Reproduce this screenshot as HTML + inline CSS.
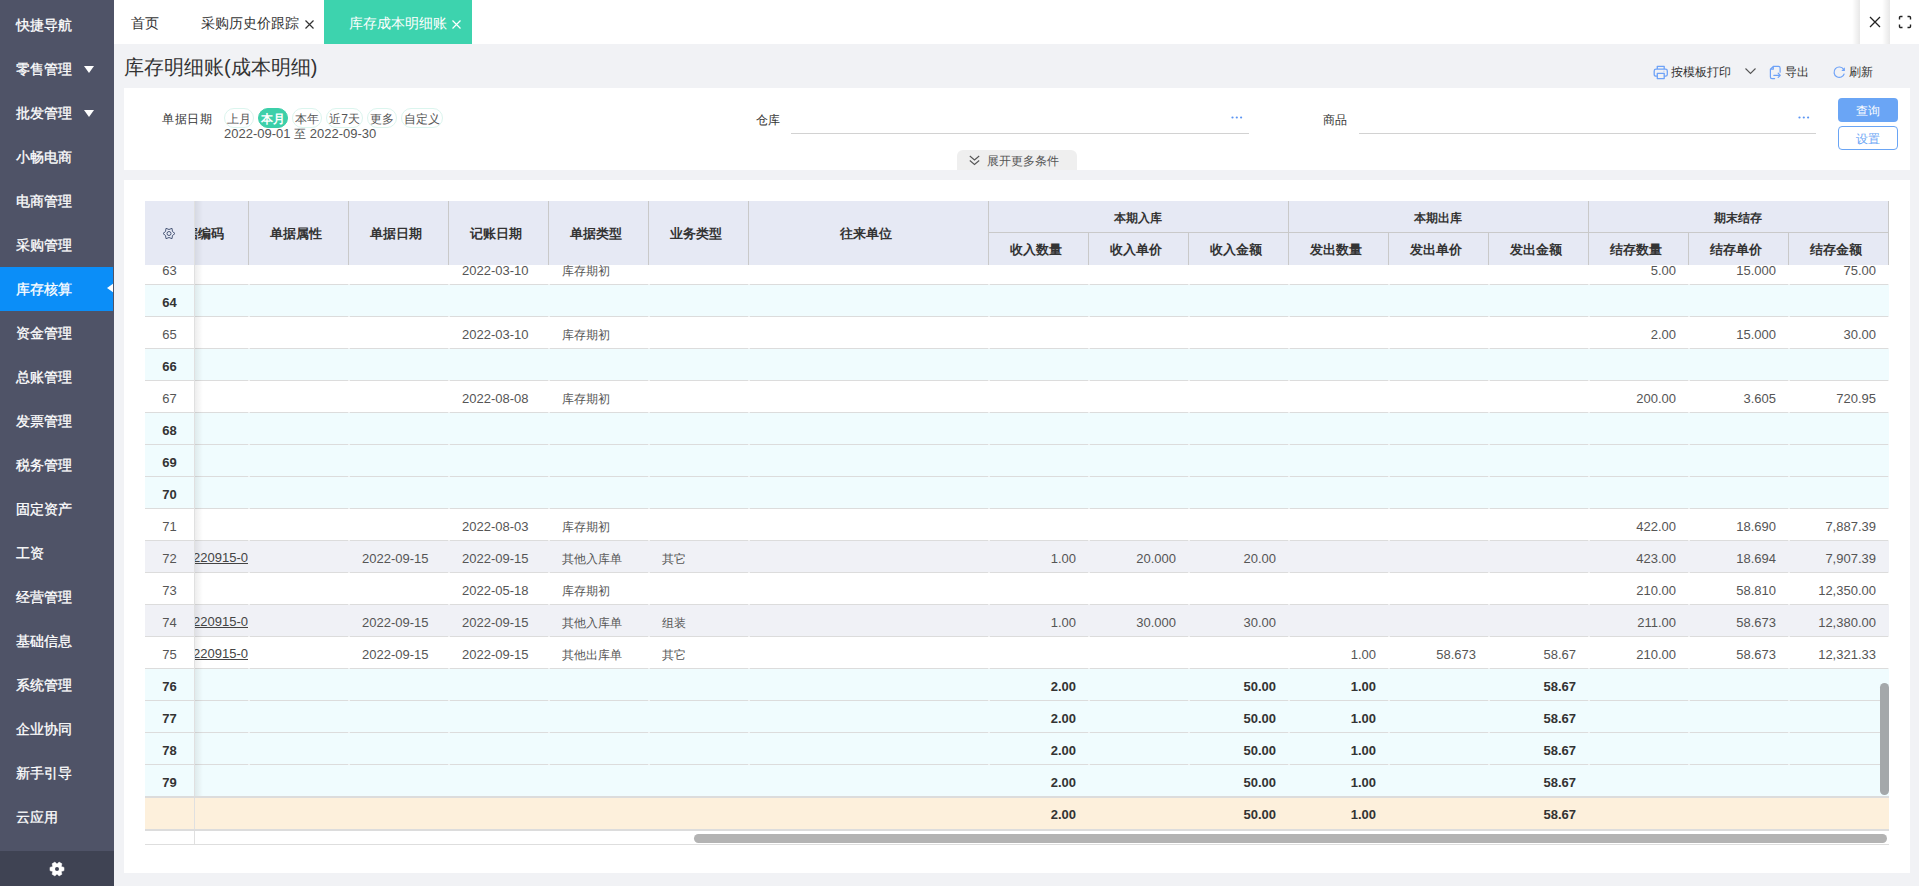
<!DOCTYPE html><html><head><meta charset="utf-8"><style>
*{margin:0;padding:0;box-sizing:border-box}
html,body{width:1919px;height:886px;overflow:hidden;background:#f1f2f5;font-family:"Liberation Sans",sans-serif;color:#333}
.ab{position:absolute}
.t{position:absolute;white-space:nowrap;line-height:1}
#side{position:absolute;left:0;top:0;width:114px;height:886px;background:#4f5367}
.si{position:absolute;left:0;width:114px;height:44px;color:#fff;font-size:14px;-webkit-text-stroke:.3px #fff;line-height:44px;padding-left:16px}
.si.act{background:linear-gradient(to right,#0b8ef8 113px,#4f5367 113px)}
.tri{position:absolute;left:84px;top:19px;width:0;height:0;border-left:5px solid transparent;border-right:5px solid transparent;border-top:7px solid #fff}
#tabs{position:absolute;left:114px;top:0;width:1805px;height:44px;background:#fff}
.tab{position:absolute;top:0;height:44px;line-height:44px;font-size:14px;color:#333}
.x{font-size:14px}
.pill{position:absolute;top:108px;height:20px;line-height:20px;font-size:12px;color:#555;border:1px solid #dbf5ee;border-radius:10px;text-align:center}
.pill.on{background:#3ccfa9;border-color:#3ccfa9;color:#fff;font-weight:bold}
.hd{position:absolute;background:#e6e9f4;font-weight:bold;font-size:13px;color:#333;text-align:center}
.c{position:absolute;font-size:13px;color:#555;white-space:nowrap;line-height:36px;height:32px}
.r{text-align:right}
.b{font-weight:bold;color:#333}
</style></head><body>
<div id="side">
<div class="si" style="top:3px">快捷导航</div>
<div class="si" style="top:47px">零售管理<span class="tri"></span></div>
<div class="si" style="top:91px">批发管理<span class="tri"></span></div>
<div class="si" style="top:135px">小畅电商</div>
<div class="si" style="top:179px">电商管理</div>
<div class="si" style="top:223px">采购管理</div>
<div class="si act" style="top:267px">库存核算<svg class="ab" style="left:106px;top:15px" width="8" height="12" viewBox="0 0 8 12"><path d="M1 6L7 1.7V10.3z" fill="#fff"/></svg></div>
<div class="si" style="top:311px">资金管理</div>
<div class="si" style="top:355px">总账管理</div>
<div class="si" style="top:399px">发票管理</div>
<div class="si" style="top:443px">税务管理</div>
<div class="si" style="top:487px">固定资产</div>
<div class="si" style="top:531px">工资</div>
<div class="si" style="top:575px">经营管理</div>
<div class="si" style="top:619px">基础信息</div>
<div class="si" style="top:663px">系统管理</div>
<div class="si" style="top:707px">企业协同</div>
<div class="si" style="top:751px">新手引导</div>
<div class="si" style="top:795px">云应用</div>
<div class="ab" style="left:0;top:851px;width:114px;height:35px;background:#3f4353"></div>
<svg class="ab" style="left:49px;top:861px" width="16" height="16" viewBox="0 0 16 16"><path fill="#fff" stroke="#fff" stroke-width="0.5" stroke-linejoin="round" fill-rule="evenodd" d="M12.24 10.45 L15.02 9.62 L15.02 6.38 L12.24 5.55 L12.91 2.73 L10.11 1.11 L8.00 3.10 L5.89 1.11 L3.09 2.73 L3.76 5.55 L0.98 6.38 L0.98 9.62 L3.76 10.45 L3.09 13.27 L5.89 14.89 L8.00 12.90 L10.11 14.89 L12.91 13.27Z"/><circle cx="8" cy="8" r="2" fill="#3f4353"/></svg>
</div>
<div id="tabs"></div>
<div class="t" style="left:131px;top:16px;font-size:14px;color:#333">首页</div>
<div class="t" style="left:201px;top:16px;font-size:14px;color:#333">采购历史价跟踪</div>
<svg class="ab" style="left:305px;top:20px" width="9" height="9" viewBox="0 0 9 9"><path d="M.5.5l8 8M8.5.5l-8 8" stroke="#333" stroke-width="1.2"/></svg>
<div class="ab" style="left:324px;top:0;width:148px;height:44px;background:#3dd3ae"></div>
<div class="t" style="left:349px;top:16px;font-size:14px;color:#fff">库存成本明细账</div>
<svg class="ab" style="left:452px;top:20px" width="9" height="9" viewBox="0 0 9 9"><path d="M.5.5l8 8M8.5.5l-8 8" stroke="#fff" stroke-width="1.2"/></svg>
<div class="ab" style="left:1852px;top:0;width:8px;height:44px;background:linear-gradient(to right,rgba(0,0,0,0),rgba(0,0,0,.09))"></div>
<div class="ab" style="left:1882px;top:0;width:8px;height:44px;background:linear-gradient(to right,rgba(0,0,0,0),rgba(0,0,0,.09))"></div>
<svg class="ab" style="left:1869px;top:16px" width="12" height="12" viewBox="0 0 12 12"><path d="M1 1l10 10M11 1L1 11" stroke="#222" stroke-width="1.3"/></svg>
<svg class="ab" style="left:1898px;top:15px" width="14" height="14" viewBox="0 0 14 14"><path d="M1.5 4.5V2.5a1 1 0 0 1 1-1h2M9.5 1.5h2a1 1 0 0 1 1 1v2M12.5 9.5v2a1 1 0 0 1-1 1h-2M4.5 12.5h-2a1 1 0 0 1-1-1v-2" fill="none" stroke="#222" stroke-width="1.4"/></svg>
<div class="t" style="left:124px;top:57px;font-size:20px;color:#333">库存明细账(成本明细)</div>
<svg class="ab" style="left:1653px;top:65px" width="15" height="15" viewBox="0 0 15 15"><path d="M4.3 4.2V1.3h6.9v2.9M4.3 11.2H3a1.8 1.8 0 0 1-1.8-1.8V6a1.8 1.8 0 0 1 1.8-1.8h9.5A1.8 1.8 0 0 1 14.3 6v3.4a1.8 1.8 0 0 1-1.8 1.8h-1.3M4.3 8.3h6.9v5.3H4.3z" fill="none" stroke="#6ea2f7" stroke-width="1.3" stroke-linejoin="round"/><path d="M10.3 6.2h1.2" stroke="#a9c6fa" stroke-width="1"/></svg>
<div class="t" style="left:1671px;top:66px;font-size:12px;color:#333">按模板打印</div>
<svg class="ab" style="left:1745px;top:68px" width="11" height="7" viewBox="0 0 11 7"><path d="M.5.5l5 5 5-5" fill="none" stroke="#555" stroke-width="1.1"/></svg>
<svg class="ab" style="left:1769px;top:65px" width="13" height="15" viewBox="0 0 13 15"><path d="M4.3 1.3h5.2a1.6 1.6 0 0 1 1.6 1.6v4.3M5.6 13.6H3a1.6 1.6 0 0 1-1.6-1.6V4.2L4.3 1.3v2.9H1.4M4.8 10.3h6.5M9.2 8.2l2.1 2.1-2.1 2.1" fill="none" stroke="#6ea2f7" stroke-width="1.2" stroke-linejoin="round" stroke-linecap="round"/></svg>
<div class="t" style="left:1785px;top:66px;font-size:12px;color:#333">导出</div>
<svg class="ab" style="left:1832px;top:66px" width="14" height="13" viewBox="0 0 14 13"><path d="M11.6 3.3A5.2 5.2 0 1 0 12.3 7.6" fill="none" stroke="#6ea2f7" stroke-width="1.2"/><path d="M12.9 1.3v3.6H9.3z" fill="#6ea2f7"/></svg>
<div class="t" style="left:1849px;top:66px;font-size:12px;color:#333">刷新</div>
<div class="ab" style="left:124px;top:88px;width:1786px;height:82px;background:#fff"></div>
<div class="t" style="left:162px;top:113px;font-size:12px;color:#333;letter-spacing:.5px">单据日期</div>
<div class="pill" style="left:224px;width:30px">上月</div>
<div class="pill on" style="left:258px;width:30px">本月</div>
<div class="pill" style="left:292px;width:30px">本年</div>
<div class="pill" style="left:326px;width:37px">近7天</div>
<div class="pill" style="left:367px;width:30px">更多</div>
<div class="pill" style="left:401px;width:42px">自定义</div>
<div class="t" style="left:224px;top:127px;font-size:13px;color:#555">2022-09-01 <span style="font-size:12px">至</span> 2022-09-30</div>
<div class="t" style="left:756px;top:114px;font-size:12px;color:#333">仓库</div>
<div class="ab" style="left:791px;top:133px;width:458px;height:1px;background:#d2d2d2"></div>
<svg class="ab" style="left:1231px;top:116px" width="12" height="3" viewBox="0 0 12 3"><circle cx="1.5" cy="1.5" r="1.1" fill="#5b95f3"/><circle cx="5.8" cy="1.5" r="1.1" fill="#5b95f3"/><circle cx="10.1" cy="1.5" r="1.1" fill="#5b95f3"/></svg>
<div class="t" style="left:1323px;top:114px;font-size:12px;color:#333">商品</div>
<div class="ab" style="left:1359px;top:133px;width:457px;height:1px;background:#d2d2d2"></div>
<svg class="ab" style="left:1798px;top:116px" width="12" height="3" viewBox="0 0 12 3"><circle cx="1.5" cy="1.5" r="1.1" fill="#5b95f3"/><circle cx="5.8" cy="1.5" r="1.1" fill="#5b95f3"/><circle cx="10.1" cy="1.5" r="1.1" fill="#5b95f3"/></svg>
<div class="ab" style="left:1838px;top:98px;width:60px;height:24px;background:#6aa5f5;border-radius:4px;color:#fff;font-size:12px;line-height:27px;text-align:center">查询</div>
<div class="ab" style="left:1838px;top:126px;width:60px;height:24px;background:#fff;border:1px solid #6aa5f5;border-radius:4px;color:#6aa5f5;font-size:12px;line-height:25px;text-align:center">设置</div>
<div class="ab" style="left:957px;top:150px;width:120px;height:20px;background:#efefef;border-radius:6px 6px 0 0"></div>
<svg class="ab" style="left:969px;top:155px" width="11" height="11" viewBox="0 0 11 11"><path d="M.8 1l4.7 4 4.7-4M.8 5.5l4.7 4 4.7-4" fill="none" stroke="#555" stroke-width="1.1"/></svg>
<div class="t" style="left:987px;top:155px;font-size:12px;color:#555">展开更多条件</div>
<div class="ab" style="left:124px;top:180px;width:1786px;height:693px;background:#fff"></div>
<div class="ab" style="left:145px;top:265px;width:1744px;height:531px;overflow:hidden">
<div class="ab" style="left:0;top:-12px;width:1744px;height:31px;background:#fff"></div>
<div class="ab" style="left:0;top:19px;width:1744px;height:1px;background:#dcdcdc"></div>
<div class="c" style="left:317px;top:-12px;font-size:13px">2022-03-10</div>
<div class="c" style="left:417px;top:-12px;font-size:12px">库存期初</div>
<div class="c r" style="right:213px;top:-12px">5.00</div>
<div class="c r" style="right:113px;top:-12px">15.000</div>
<div class="c r" style="right:13px;top:-12px">75.00</div>
<div class="ab" style="left:0;top:20px;width:1744px;height:31px;background:#f0fcfe"></div>
<div class="ab" style="left:0;top:51px;width:1744px;height:1px;background:#dcdcdc"></div>
<div class="ab" style="left:0;top:52px;width:1744px;height:31px;background:#fff"></div>
<div class="ab" style="left:0;top:83px;width:1744px;height:1px;background:#dcdcdc"></div>
<div class="c" style="left:317px;top:52px;font-size:13px">2022-03-10</div>
<div class="c" style="left:417px;top:52px;font-size:12px">库存期初</div>
<div class="c r" style="right:213px;top:52px">2.00</div>
<div class="c r" style="right:113px;top:52px">15.000</div>
<div class="c r" style="right:13px;top:52px">30.00</div>
<div class="ab" style="left:0;top:84px;width:1744px;height:31px;background:#f0fcfe"></div>
<div class="ab" style="left:0;top:115px;width:1744px;height:1px;background:#dcdcdc"></div>
<div class="ab" style="left:0;top:116px;width:1744px;height:31px;background:#fff"></div>
<div class="ab" style="left:0;top:147px;width:1744px;height:1px;background:#dcdcdc"></div>
<div class="c" style="left:317px;top:116px;font-size:13px">2022-08-08</div>
<div class="c" style="left:417px;top:116px;font-size:12px">库存期初</div>
<div class="c r" style="right:213px;top:116px">200.00</div>
<div class="c r" style="right:113px;top:116px">3.605</div>
<div class="c r" style="right:13px;top:116px">720.95</div>
<div class="ab" style="left:0;top:148px;width:1744px;height:31px;background:#f0fcfe"></div>
<div class="ab" style="left:0;top:179px;width:1744px;height:1px;background:#dcdcdc"></div>
<div class="ab" style="left:0;top:180px;width:1744px;height:31px;background:#f0fcfe"></div>
<div class="ab" style="left:0;top:211px;width:1744px;height:1px;background:#dcdcdc"></div>
<div class="ab" style="left:0;top:212px;width:1744px;height:31px;background:#f0fcfe"></div>
<div class="ab" style="left:0;top:243px;width:1744px;height:1px;background:#dcdcdc"></div>
<div class="ab" style="left:0;top:244px;width:1744px;height:31px;background:#fff"></div>
<div class="ab" style="left:0;top:275px;width:1744px;height:1px;background:#dcdcdc"></div>
<div class="c" style="left:317px;top:244px;font-size:13px">2022-08-03</div>
<div class="c" style="left:417px;top:244px;font-size:12px">库存期初</div>
<div class="c r" style="right:213px;top:244px">422.00</div>
<div class="c r" style="right:113px;top:244px">18.690</div>
<div class="c r" style="right:13px;top:244px">7,887.39</div>
<div class="ab" style="left:0;top:276px;width:1744px;height:31px;background:#f0f1f6"></div>
<div class="ab" style="left:0;top:307px;width:1744px;height:1px;background:#dcdcdc"></div>
<div class="ab" style="left:49px;top:276px;width:54px;height:31px;overflow:hidden"><div class="c r" style="right:0;top:-1px;text-decoration:underline;color:#444">220915-0</div></div>
<div class="c" style="left:217px;top:276px;font-size:13px">2022-09-15</div>
<div class="c" style="left:317px;top:276px;font-size:13px">2022-09-15</div>
<div class="c" style="left:417px;top:276px;font-size:12px">其他入库单</div>
<div class="c" style="left:517px;top:276px;font-size:12px">其它</div>
<div class="c r" style="right:813px;top:276px">1.00</div>
<div class="c r" style="right:713px;top:276px">20.000</div>
<div class="c r" style="right:613px;top:276px">20.00</div>
<div class="c r" style="right:213px;top:276px">423.00</div>
<div class="c r" style="right:113px;top:276px">18.694</div>
<div class="c r" style="right:13px;top:276px">7,907.39</div>
<div class="ab" style="left:0;top:308px;width:1744px;height:31px;background:#fff"></div>
<div class="ab" style="left:0;top:339px;width:1744px;height:1px;background:#dcdcdc"></div>
<div class="c" style="left:317px;top:308px;font-size:13px">2022-05-18</div>
<div class="c" style="left:417px;top:308px;font-size:12px">库存期初</div>
<div class="c r" style="right:213px;top:308px">210.00</div>
<div class="c r" style="right:113px;top:308px">58.810</div>
<div class="c r" style="right:13px;top:308px">12,350.00</div>
<div class="ab" style="left:0;top:340px;width:1744px;height:31px;background:#f0f1f6"></div>
<div class="ab" style="left:0;top:371px;width:1744px;height:1px;background:#dcdcdc"></div>
<div class="ab" style="left:49px;top:340px;width:54px;height:31px;overflow:hidden"><div class="c r" style="right:0;top:-1px;text-decoration:underline;color:#444">220915-0</div></div>
<div class="c" style="left:217px;top:340px;font-size:13px">2022-09-15</div>
<div class="c" style="left:317px;top:340px;font-size:13px">2022-09-15</div>
<div class="c" style="left:417px;top:340px;font-size:12px">其他入库单</div>
<div class="c" style="left:517px;top:340px;font-size:12px">组装</div>
<div class="c r" style="right:813px;top:340px">1.00</div>
<div class="c r" style="right:713px;top:340px">30.000</div>
<div class="c r" style="right:613px;top:340px">30.00</div>
<div class="c r" style="right:213px;top:340px">211.00</div>
<div class="c r" style="right:113px;top:340px">58.673</div>
<div class="c r" style="right:13px;top:340px">12,380.00</div>
<div class="ab" style="left:0;top:372px;width:1744px;height:31px;background:#fff"></div>
<div class="ab" style="left:0;top:403px;width:1744px;height:1px;background:#dcdcdc"></div>
<div class="ab" style="left:49px;top:372px;width:54px;height:31px;overflow:hidden"><div class="c r" style="right:0;top:-1px;text-decoration:underline;color:#444">220915-0</div></div>
<div class="c" style="left:217px;top:372px;font-size:13px">2022-09-15</div>
<div class="c" style="left:317px;top:372px;font-size:13px">2022-09-15</div>
<div class="c" style="left:417px;top:372px;font-size:12px">其他出库单</div>
<div class="c" style="left:517px;top:372px;font-size:12px">其它</div>
<div class="c r" style="right:513px;top:372px">1.00</div>
<div class="c r" style="right:413px;top:372px">58.673</div>
<div class="c r" style="right:313px;top:372px">58.67</div>
<div class="c r" style="right:213px;top:372px">210.00</div>
<div class="c r" style="right:113px;top:372px">58.673</div>
<div class="c r" style="right:13px;top:372px">12,321.33</div>
<div class="ab" style="left:0;top:404px;width:1744px;height:31px;background:#f0fcfe"></div>
<div class="ab" style="left:0;top:435px;width:1744px;height:1px;background:#dcdcdc"></div>
<div class="c b r" style="right:813px;top:404px">2.00</div>
<div class="c b r" style="right:613px;top:404px">50.00</div>
<div class="c b r" style="right:513px;top:404px">1.00</div>
<div class="c b r" style="right:313px;top:404px">58.67</div>
<div class="ab" style="left:0;top:436px;width:1744px;height:31px;background:#f0fcfe"></div>
<div class="ab" style="left:0;top:467px;width:1744px;height:1px;background:#dcdcdc"></div>
<div class="c b r" style="right:813px;top:436px">2.00</div>
<div class="c b r" style="right:613px;top:436px">50.00</div>
<div class="c b r" style="right:513px;top:436px">1.00</div>
<div class="c b r" style="right:313px;top:436px">58.67</div>
<div class="ab" style="left:0;top:468px;width:1744px;height:31px;background:#f0fcfe"></div>
<div class="ab" style="left:0;top:499px;width:1744px;height:1px;background:#dcdcdc"></div>
<div class="c b r" style="right:813px;top:468px">2.00</div>
<div class="c b r" style="right:613px;top:468px">50.00</div>
<div class="c b r" style="right:513px;top:468px">1.00</div>
<div class="c b r" style="right:313px;top:468px">58.67</div>
<div class="ab" style="left:0;top:500px;width:1744px;height:31px;background:#f0fcfe"></div>
<div class="ab" style="left:0;top:531px;width:1744px;height:1px;background:#dcdcdc"></div>
<div class="c b r" style="right:813px;top:500px">2.00</div>
<div class="c b r" style="right:613px;top:500px">50.00</div>
<div class="c b r" style="right:513px;top:500px">1.00</div>
<div class="c b r" style="right:313px;top:500px">58.67</div>
<div class="ab" style="left:103px;top:0;width:2px;height:531px;background:repeating-linear-gradient(to bottom,transparent 0,transparent 19px,rgba(255,255,255,.6) 19px,rgba(255,255,255,.6) 20px,transparent 20px,transparent 32px)"></div>
<div class="ab" style="left:203px;top:0;width:2px;height:531px;background:repeating-linear-gradient(to bottom,transparent 0,transparent 19px,rgba(255,255,255,.6) 19px,rgba(255,255,255,.6) 20px,transparent 20px,transparent 32px)"></div>
<div class="ab" style="left:303px;top:0;width:2px;height:531px;background:repeating-linear-gradient(to bottom,transparent 0,transparent 19px,rgba(255,255,255,.6) 19px,rgba(255,255,255,.6) 20px,transparent 20px,transparent 32px)"></div>
<div class="ab" style="left:403px;top:0;width:2px;height:531px;background:repeating-linear-gradient(to bottom,transparent 0,transparent 19px,rgba(255,255,255,.6) 19px,rgba(255,255,255,.6) 20px,transparent 20px,transparent 32px)"></div>
<div class="ab" style="left:503px;top:0;width:2px;height:531px;background:repeating-linear-gradient(to bottom,transparent 0,transparent 19px,rgba(255,255,255,.6) 19px,rgba(255,255,255,.6) 20px,transparent 20px,transparent 32px)"></div>
<div class="ab" style="left:603px;top:0;width:2px;height:531px;background:repeating-linear-gradient(to bottom,transparent 0,transparent 19px,rgba(255,255,255,.6) 19px,rgba(255,255,255,.6) 20px,transparent 20px,transparent 32px)"></div>
<div class="ab" style="left:843px;top:0;width:2px;height:531px;background:repeating-linear-gradient(to bottom,transparent 0,transparent 19px,rgba(255,255,255,.6) 19px,rgba(255,255,255,.6) 20px,transparent 20px,transparent 32px)"></div>
<div class="ab" style="left:943px;top:0;width:2px;height:531px;background:repeating-linear-gradient(to bottom,transparent 0,transparent 19px,rgba(255,255,255,.6) 19px,rgba(255,255,255,.6) 20px,transparent 20px,transparent 32px)"></div>
<div class="ab" style="left:1043px;top:0;width:2px;height:531px;background:repeating-linear-gradient(to bottom,transparent 0,transparent 19px,rgba(255,255,255,.6) 19px,rgba(255,255,255,.6) 20px,transparent 20px,transparent 32px)"></div>
<div class="ab" style="left:1143px;top:0;width:2px;height:531px;background:repeating-linear-gradient(to bottom,transparent 0,transparent 19px,rgba(255,255,255,.6) 19px,rgba(255,255,255,.6) 20px,transparent 20px,transparent 32px)"></div>
<div class="ab" style="left:1243px;top:0;width:2px;height:531px;background:repeating-linear-gradient(to bottom,transparent 0,transparent 19px,rgba(255,255,255,.6) 19px,rgba(255,255,255,.6) 20px,transparent 20px,transparent 32px)"></div>
<div class="ab" style="left:1343px;top:0;width:2px;height:531px;background:repeating-linear-gradient(to bottom,transparent 0,transparent 19px,rgba(255,255,255,.6) 19px,rgba(255,255,255,.6) 20px,transparent 20px,transparent 32px)"></div>
<div class="ab" style="left:1443px;top:0;width:2px;height:531px;background:repeating-linear-gradient(to bottom,transparent 0,transparent 19px,rgba(255,255,255,.6) 19px,rgba(255,255,255,.6) 20px,transparent 20px,transparent 32px)"></div>
<div class="ab" style="left:1543px;top:0;width:2px;height:531px;background:repeating-linear-gradient(to bottom,transparent 0,transparent 19px,rgba(255,255,255,.6) 19px,rgba(255,255,255,.6) 20px,transparent 20px,transparent 32px)"></div>
<div class="ab" style="left:1643px;top:0;width:2px;height:531px;background:repeating-linear-gradient(to bottom,transparent 0,transparent 19px,rgba(255,255,255,.6) 19px,rgba(255,255,255,.6) 20px,transparent 20px,transparent 32px)"></div>
<div class="ab" style="left:1743px;top:0;width:2px;height:531px;background:repeating-linear-gradient(to bottom,transparent 0,transparent 19px,rgba(255,255,255,.6) 19px,rgba(255,255,255,.6) 20px,transparent 20px,transparent 32px)"></div>
</div>
<div class="ab" style="left:145px;top:265px;width:49px;height:531px;overflow:hidden">
<div class="ab" style="left:0;top:-12px;width:49px;height:31px;background:#fff;text-align:center;line-height:36px;font-size:13px;font-weight:normal;color:#555">63</div>
<div class="ab" style="left:0;top:19px;width:49px;height:1px;background:#dcdcdc"></div>
<div class="ab" style="left:0;top:20px;width:49px;height:31px;background:#f0fcfe;text-align:center;line-height:36px;font-size:13px;font-weight:bold;color:#333">64</div>
<div class="ab" style="left:0;top:51px;width:49px;height:1px;background:#dcdcdc"></div>
<div class="ab" style="left:0;top:52px;width:49px;height:31px;background:#fff;text-align:center;line-height:36px;font-size:13px;font-weight:normal;color:#555">65</div>
<div class="ab" style="left:0;top:83px;width:49px;height:1px;background:#dcdcdc"></div>
<div class="ab" style="left:0;top:84px;width:49px;height:31px;background:#f0fcfe;text-align:center;line-height:36px;font-size:13px;font-weight:bold;color:#333">66</div>
<div class="ab" style="left:0;top:115px;width:49px;height:1px;background:#dcdcdc"></div>
<div class="ab" style="left:0;top:116px;width:49px;height:31px;background:#fff;text-align:center;line-height:36px;font-size:13px;font-weight:normal;color:#555">67</div>
<div class="ab" style="left:0;top:147px;width:49px;height:1px;background:#dcdcdc"></div>
<div class="ab" style="left:0;top:148px;width:49px;height:31px;background:#f0fcfe;text-align:center;line-height:36px;font-size:13px;font-weight:bold;color:#333">68</div>
<div class="ab" style="left:0;top:179px;width:49px;height:1px;background:#dcdcdc"></div>
<div class="ab" style="left:0;top:180px;width:49px;height:31px;background:#f0fcfe;text-align:center;line-height:36px;font-size:13px;font-weight:bold;color:#333">69</div>
<div class="ab" style="left:0;top:211px;width:49px;height:1px;background:#dcdcdc"></div>
<div class="ab" style="left:0;top:212px;width:49px;height:31px;background:#f0fcfe;text-align:center;line-height:36px;font-size:13px;font-weight:bold;color:#333">70</div>
<div class="ab" style="left:0;top:243px;width:49px;height:1px;background:#dcdcdc"></div>
<div class="ab" style="left:0;top:244px;width:49px;height:31px;background:#fff;text-align:center;line-height:36px;font-size:13px;font-weight:normal;color:#555">71</div>
<div class="ab" style="left:0;top:275px;width:49px;height:1px;background:#dcdcdc"></div>
<div class="ab" style="left:0;top:276px;width:49px;height:31px;background:#f0f1f6;text-align:center;line-height:36px;font-size:13px;font-weight:normal;color:#555">72</div>
<div class="ab" style="left:0;top:307px;width:49px;height:1px;background:#dcdcdc"></div>
<div class="ab" style="left:0;top:308px;width:49px;height:31px;background:#fff;text-align:center;line-height:36px;font-size:13px;font-weight:normal;color:#555">73</div>
<div class="ab" style="left:0;top:339px;width:49px;height:1px;background:#dcdcdc"></div>
<div class="ab" style="left:0;top:340px;width:49px;height:31px;background:#f0f1f6;text-align:center;line-height:36px;font-size:13px;font-weight:normal;color:#555">74</div>
<div class="ab" style="left:0;top:371px;width:49px;height:1px;background:#dcdcdc"></div>
<div class="ab" style="left:0;top:372px;width:49px;height:31px;background:#fff;text-align:center;line-height:36px;font-size:13px;font-weight:normal;color:#555">75</div>
<div class="ab" style="left:0;top:403px;width:49px;height:1px;background:#dcdcdc"></div>
<div class="ab" style="left:0;top:404px;width:49px;height:31px;background:#f0fcfe;text-align:center;line-height:36px;font-size:13px;font-weight:bold;color:#333">76</div>
<div class="ab" style="left:0;top:435px;width:49px;height:1px;background:#dcdcdc"></div>
<div class="ab" style="left:0;top:436px;width:49px;height:31px;background:#f0fcfe;text-align:center;line-height:36px;font-size:13px;font-weight:bold;color:#333">77</div>
<div class="ab" style="left:0;top:467px;width:49px;height:1px;background:#dcdcdc"></div>
<div class="ab" style="left:0;top:468px;width:49px;height:31px;background:#f0fcfe;text-align:center;line-height:36px;font-size:13px;font-weight:bold;color:#333">78</div>
<div class="ab" style="left:0;top:499px;width:49px;height:1px;background:#dcdcdc"></div>
<div class="ab" style="left:0;top:500px;width:49px;height:31px;background:#f0fcfe;text-align:center;line-height:36px;font-size:13px;font-weight:bold;color:#333">79</div>
<div class="ab" style="left:0;top:531px;width:49px;height:1px;background:#dcdcdc"></div>
</div>
<div class="ab" style="left:145px;top:201px;width:1744px;height:64px;background:#e6e9f4"></div>
<div class="ab" style="left:248px;top:201px;width:1px;height:64px;background:#c9c9c9"></div>
<div class="ab" style="left:348px;top:201px;width:1px;height:64px;background:#c9c9c9"></div>
<div class="ab" style="left:448px;top:201px;width:1px;height:64px;background:#c9c9c9"></div>
<div class="ab" style="left:548px;top:201px;width:1px;height:64px;background:#c9c9c9"></div>
<div class="ab" style="left:648px;top:201px;width:1px;height:64px;background:#c9c9c9"></div>
<div class="ab" style="left:748px;top:201px;width:1px;height:64px;background:#c9c9c9"></div>
<div class="ab" style="left:988px;top:201px;width:1px;height:64px;background:#c9c9c9"></div>
<div class="ab" style="left:1088px;top:201px;width:1px;height:64px;background:#c9c9c9"></div>
<div class="ab" style="left:1188px;top:201px;width:1px;height:64px;background:#c9c9c9"></div>
<div class="ab" style="left:1288px;top:201px;width:1px;height:64px;background:#c9c9c9"></div>
<div class="ab" style="left:1388px;top:201px;width:1px;height:64px;background:#c9c9c9"></div>
<div class="ab" style="left:1488px;top:201px;width:1px;height:64px;background:#c9c9c9"></div>
<div class="ab" style="left:1588px;top:201px;width:1px;height:64px;background:#c9c9c9"></div>
<div class="ab" style="left:1688px;top:201px;width:1px;height:64px;background:#c9c9c9"></div>
<div class="ab" style="left:1788px;top:201px;width:1px;height:64px;background:#c9c9c9"></div>
<div class="ab" style="left:1888px;top:201px;width:1px;height:64px;background:#c9c9c9"></div>
<div class="ab" style="left:988px;top:232px;width:901px;height:1px;background:#c9c9c9"></div>
<div class="ab" style="left:989px;top:201px;width:299px;height:31px;background:#e6e9f4"></div>
<div class="ab" style="left:1289px;top:201px;width:299px;height:31px;background:#e6e9f4"></div>
<div class="ab" style="left:1589px;top:201px;width:299px;height:31px;background:#e6e9f4"></div>
<div class="ab" style="left:194px;top:201px;width:54px;height:64px;overflow:hidden"><div class="t" style="left:-96px;width:200px;top:26px;text-align:center;font-size:13px;font-weight:bold;color:#333">单据编码</div></div>
<div class="t" style="left:196px;width:200px;top:227px;text-align:center;font-size:13px;font-weight:bold;color:#333">单据属性</div>
<div class="t" style="left:296px;width:200px;top:227px;text-align:center;font-size:13px;font-weight:bold;color:#333">单据日期</div>
<div class="t" style="left:396px;width:200px;top:227px;text-align:center;font-size:13px;font-weight:bold;color:#333">记账日期</div>
<div class="t" style="left:496px;width:200px;top:227px;text-align:center;font-size:13px;font-weight:bold;color:#333">单据类型</div>
<div class="t" style="left:596px;width:200px;top:227px;text-align:center;font-size:13px;font-weight:bold;color:#333">业务类型</div>
<div class="t" style="left:766px;width:200px;top:227px;text-align:center;font-size:13px;font-weight:bold;color:#333">往来单位</div>
<div class="t" style="left:1038px;width:200px;top:212px;text-align:center;font-size:12px;font-weight:bold;color:#333">本期入库</div>
<div class="t" style="left:1338px;width:200px;top:212px;text-align:center;font-size:12px;font-weight:bold;color:#333">本期出库</div>
<div class="t" style="left:1638px;width:200px;top:212px;text-align:center;font-size:12px;font-weight:bold;color:#333">期末结存</div>
<div class="t" style="left:936px;width:200px;top:243px;text-align:center;font-size:13px;font-weight:bold;color:#333">收入数量</div>
<div class="t" style="left:1036px;width:200px;top:243px;text-align:center;font-size:13px;font-weight:bold;color:#333">收入单价</div>
<div class="t" style="left:1136px;width:200px;top:243px;text-align:center;font-size:13px;font-weight:bold;color:#333">收入金额</div>
<div class="t" style="left:1236px;width:200px;top:243px;text-align:center;font-size:13px;font-weight:bold;color:#333">发出数量</div>
<div class="t" style="left:1336px;width:200px;top:243px;text-align:center;font-size:13px;font-weight:bold;color:#333">发出单价</div>
<div class="t" style="left:1436px;width:200px;top:243px;text-align:center;font-size:13px;font-weight:bold;color:#333">发出金额</div>
<div class="t" style="left:1536px;width:200px;top:243px;text-align:center;font-size:13px;font-weight:bold;color:#333">结存数量</div>
<div class="t" style="left:1636px;width:200px;top:243px;text-align:center;font-size:13px;font-weight:bold;color:#333">结存单价</div>
<div class="t" style="left:1736px;width:200px;top:243px;text-align:center;font-size:13px;font-weight:bold;color:#333">结存金额</div>
<svg class="ab" style="left:162px;top:227px" width="14" height="13" viewBox="0 0 14 13"><path d="M13.00 6.50 L10.46 4.50 L10.00 1.30 L7.00 2.50 L4.00 1.30 L3.54 4.50 L1.00 6.50 L3.54 8.50 L4.00 11.70 L7.00 10.50 L10.00 11.70 L10.46 8.50Z" fill="none" stroke="#4a5878" stroke-width="1" stroke-linejoin="round"/><circle cx="7" cy="6.5" r="2" fill="none" stroke="#4a5878" stroke-width="1"/></svg>
<div class="ab" style="left:195px;top:201px;width:8px;height:629px;background:linear-gradient(to right,rgba(0,0,0,.07),rgba(0,0,0,0))"></div>
<div class="ab" style="left:194px;top:201px;width:1px;height:644px;background:#e0e0e0"></div>
<div class="ab" style="left:145px;top:796px;width:1744px;height:2px;background:#dcdcdc"></div>
<div class="ab" style="left:145px;top:798px;width:1744px;height:31px;background:#fdf0dc"></div>
<div class="ab" style="left:145px;top:829px;width:1744px;height:2px;background:#dcdcdc"></div>
<div class="c b r" style="right:843px;top:797px">2.00</div>
<div class="c b r" style="right:643px;top:797px">50.00</div>
<div class="c b r" style="right:543px;top:797px">1.00</div>
<div class="c b r" style="right:343px;top:797px">58.67</div>
<div class="ab" style="left:194px;top:798px;width:1px;height:31px;background:#e0e0e0"></div>
<div class="ab" style="left:145px;top:844px;width:1744px;height:1px;background:#dedede"></div>
<div class="ab" style="left:694px;top:834px;width:1193px;height:9px;background:#b3b3b3;border-radius:5px"></div>
<div class="ab" style="left:1880px;top:683px;width:9px;height:112px;background:#a4a8aa;border-radius:5px"></div>
</body></html>
